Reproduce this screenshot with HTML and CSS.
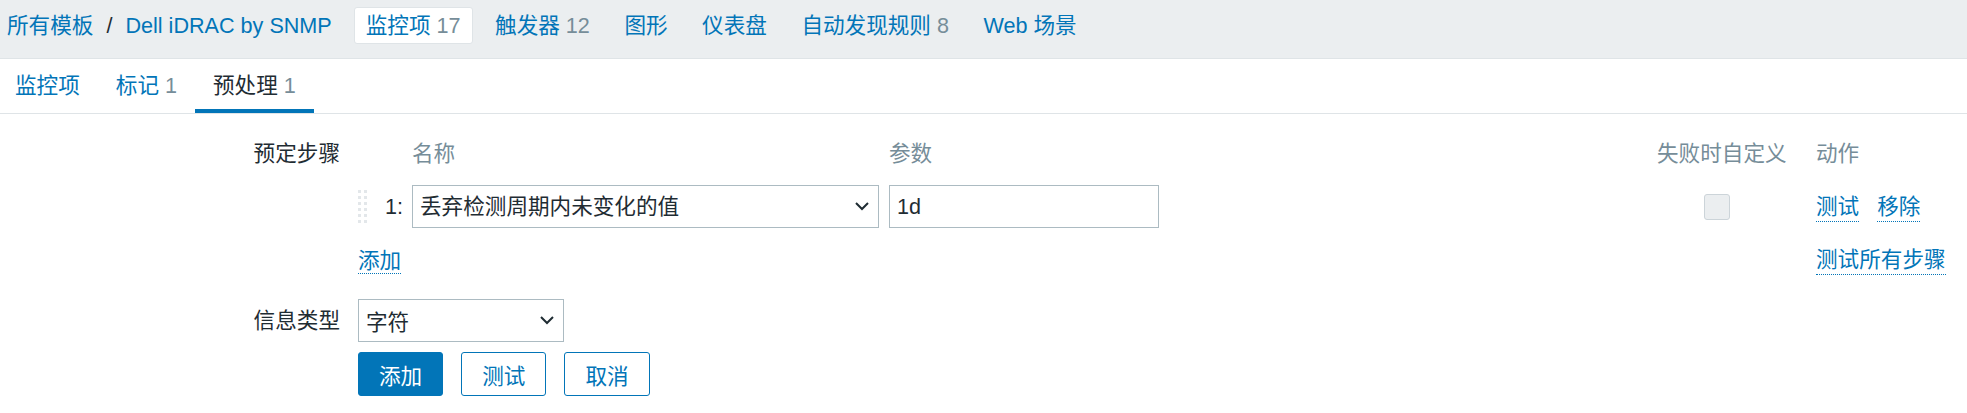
FILE: index.html
```html
<!DOCTYPE html>
<html lang="zh-CN">
<head>
<meta charset="utf-8">
<title>预处理 - Dell iDRAC by SNMP</title>
<link rel="stylesheet" href="styles.css">
</head>
<body>
<header class="topnav">
  <nav class="breadcrumbs">
    <a href="#">所有模板</a><span class="sep">/</span><a href="#">Dell iDRAC by SNMP</a>
  </nav>
  <ul class="nav-tabs">
    <li class="active"><a href="#">监控项 <span class="count">17</span></a></li>
    <li><a href="#">触发器 <span class="count">12</span></a></li>
    <li><a href="#">图形</a></li>
    <li><a href="#">仪表盘</a></li>
    <li><a href="#">自动发现规则 <span class="count">8</span></a></li>
    <li><a href="#">Web 场景</a></li>
  </ul>
</header>

<div class="tabs">
  <a class="tab" href="#">监控项</a>
  <a class="tab" href="#">标记 <span class="count">1</span></a>
  <a class="tab active" href="#">预处理 <span class="count">1</span></a>
</div>

<form class="form">
  <div class="form-row">
    <div class="label label-top">预定步骤</div>
    <div class="steps">
      <div></div>
      <div></div>
      <div class="th">名称</div>
      <div class="th th-param">参数</div>
      <div></div>
      <div class="th">失败时自定义</div>
      <div class="th th-actions">动作</div>

      <div class="handle">
        <svg width="9" height="33" viewBox="0 0 9 33"><g fill="#e3e7ea"><rect x="0" y="0" width="3" height="3"/><rect x="6" y="0" width="3" height="3"/><rect x="0" y="6" width="3" height="3"/><rect x="6" y="6" width="3" height="3"/><rect x="0" y="12" width="3" height="3"/><rect x="6" y="12" width="3" height="3"/><rect x="0" y="18" width="3" height="3"/><rect x="6" y="18" width="3" height="3"/><rect x="0" y="24" width="3" height="3"/><rect x="6" y="24" width="3" height="3"/><rect x="0" y="30" width="3" height="3"/><rect x="6" y="30" width="3" height="3"/></g></svg>
      </div>
      <div class="num">1:</div>
      <div class="select select-step">
        <span>丢弃检测周期内未变化的值</span>
        <svg class="chev" width="14" height="9" viewBox="0 0 14 9"><path d="M1 1l6 6 6-6" fill="none" stroke="#1f2c33" stroke-width="2"/></svg>
      </div>
      <div class="param"><input class="input" type="text" value="1d"></div>
      <div></div>
      <div class="onfail"><span class="checkbox"></span></div>
      <div class="actions"><a class="link" href="#">测试</a><a class="link" href="#">移除</a></div>

      <div class="add"><a class="link" href="#">添加</a></div>
      <div></div>
      <div></div>
      <div class="actions"><a class="link" href="#">测试所有步骤</a></div>
    </div>
  </div>

  <div class="form-row form-row-type">
    <div class="label">信息类型</div>
    <div>
      <div class="select select-type">
        <span>字符</span>
        <svg class="chev" width="14" height="9" viewBox="0 0 14 9"><path d="M1 1l6 6 6-6" fill="none" stroke="#1f2c33" stroke-width="2"/></svg>
      </div>
    </div>
  </div>

  <div class="form-row form-row-buttons">
    <div></div>
    <div class="buttons">
      <button class="btn btn-primary" type="button">添加</button>
      <button class="btn" type="button">测试</button>
      <button class="btn" type="button">取消</button>
    </div>
  </div>
</form>
</body>
</html>
```

FILE: styles.css
```css
* {
  box-sizing: border-box;
}

body {
  margin: 0;
  font-family: "Liberation Sans", Arial, "Noto Sans CJK SC", sans-serif;
  font-size: 21.6px;
  color: #1f2c33;
  background: #fff;
}

a {
  color: #0275b8;
  text-decoration: none;
}

.count {
  color: #768d99;
}

/* top navigation */
.topnav {
  display: flex;
  align-items: flex-start;
  height: 59px;
  padding: 7px 0 0 7px;
  background: #ebeef0;
  border-bottom: 1px solid #dfe4e7;
}

.breadcrumbs {
  display: flex;
  line-height: 37px;
  white-space: nowrap;
}

.sep {
  margin: 0 13px;
  color: #1f2c33;
}

.nav-tabs {
  display: flex;
  gap: 10.5px;
  margin: 0 0 0 22px;
  padding: 0;
  list-style: none;
}

.nav-tabs a {
  display: block;
  height: 37px;
  line-height: 35px;
  padding: 0 11px;
  border: 1px solid transparent;
  border-radius: 3px;
  white-space: nowrap;
}

.nav-tabs .active a {
  background: #fff;
  border-color: #dfe4e7;
}

/* sub tabs */
.tabs {
  display: flex;
  height: 55px;
  border-bottom: 1px solid #dfe4e7;
}

.tab {
  display: block;
  line-height: 54px;
  padding: 0 18px;
  white-space: nowrap;
}

.tab:first-child {
  padding-left: 15px;
}

.tab.active {
  color: #1f2c33;
  box-shadow: inset 0 -4px 0 #0275b8;
}

/* form */
.form {
  padding: 25px 21px 0 0;
}

.form-row {
  display: grid;
  grid-template-columns: 340px 1fr;
  column-gap: 18px;
  align-items: center;
}

.form-row-type {
  margin-top: 24px;
}

.form-row-buttons {
  margin-top: 10px;
}

.label {
  text-align: right;
  line-height: 29px;
  white-space: nowrap;
}

.label-top {
  align-self: start;
}

.steps {
  display: grid;
  grid-template-columns: 27px 27px 467px 280px 1fr 130px 159px;
  row-gap: 17px;
  align-items: center;
  line-height: 29px;
}

.th {
  color: #768d99;
  white-space: nowrap;
}

.th-param,
.param {
  padding-left: 10px;
}

.th-actions,
.actions {
  padding-left: 29px;
}

.handle {
  display: flex;
  align-items: center;
}

.handle svg {
  display: block;
}

.num {
  white-space: nowrap;
}

.select {
  display: flex;
  align-items: center;
  justify-content: space-between;
  height: 43px;
  padding: 0 9px 0 7px;
  background: #fff;
  border: 1px solid #acbbc2;
  white-space: nowrap;
}

.select-step {
  width: 467px;
}

.select-type {
  width: 206px;
}

.chev {
  display: block;
  flex: none;
}

.input {
  display: block;
  width: 270px;
  height: 43px;
  padding: 0 7px;
  font: inherit;
  color: #1f2c33;
  background: #fff;
  border: 1px solid #acbbc2;
  border-radius: 0;
  outline: none;
}

.onfail {
  display: flex;
}

.checkbox {
  display: block;
  width: 26px;
  height: 26px;
  margin-left: 47px;
  background: #ebeef0;
  border: 1px solid #ccd4d9;
  border-radius: 3px;
}

.actions {
  display: flex;
  gap: 18px;
  white-space: nowrap;
}

.link {
  border-bottom: 1px dotted #0275b8;
}

.add {
  grid-column: 1 / 5;
}

.buttons {
  display: flex;
  gap: 18px;
}

.btn {
  height: 44px;
  padding: 0 20px;
  font: inherit;
  color: #0275b8;
  background: #fff;
  border: 1px solid #0275b8;
  border-radius: 3px;
  cursor: pointer;
}

.btn-primary {
  color: #fff;
  background: #0275b8;
}
```
